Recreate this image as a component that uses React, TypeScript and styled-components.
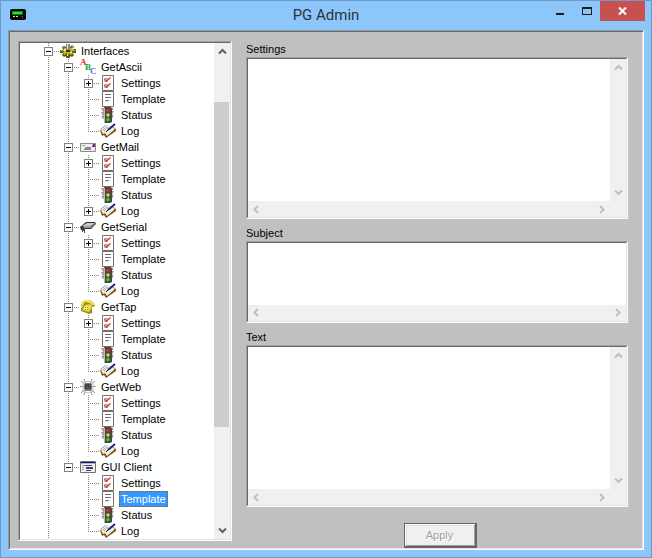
import React from "react";
import styled, { createGlobalStyle } from "styled-components";

const Global = createGlobalStyle`
  * { box-sizing: border-box; }
  html, body { margin: 0; }
  body { font-family: "Liberation Sans", Arial, sans-serif; font-size: 11px; line-height: 16px; color: #000; }
  button, textarea { font: inherit; color: inherit; margin: 0; padding: 0; border: 0; background: none; border-radius: 0; }
  ul { list-style: none; margin: 0; padding: 0; }
`;

const Window = styled.div`
  display: flex;
  flex-direction: column;
  height: 100vh;
  padding: 0 7px 7px;
  border: 1px solid #6a9bc9;
  background: #8cc6fb;
`;

const TitleBar = styled.header`
  display: grid;
  grid-template-columns: 1fr auto 1fr;
  height: 29px;
  flex: none;
`;

const AppIcon = styled.svg`
  width: 16px;
  height: 16px;
  margin: 5px 2px;
`;

const Title = styled.h1`
  margin: 0;
  font: 400 15px/29px Roboto, "Open Sans", sans-serif;
  color: #2c3338;
`;

const Controls = styled.div`
  display: flex;
  justify-content: flex-end;
  align-items: flex-start;
  margin-right: -1px;
`;

const Control = styled.button<{ $close?: boolean }>`
  display: grid;
  place-items: center;
  width: ${(p) => (p.$close ? 45 : 27)}px;
  height: 20px;
  background: ${(p) => (p.$close ? "#c75050" : "transparent")};
`;

const Client = styled.main`
  flex: 1;
  min-height: 0;
  display: grid;
  grid-template-columns: minmax(0, 214fr) minmax(0, 382fr);
  gap: 14px;
  padding: 10px 15px 1px 9px;
  background: #c0c0c0;
  border: 1px solid;
  border-color: #8a99a6 #fff #fff #8a99a6;
  box-shadow: inset 1px 1px #696969, inset -1px -1px #e3e3e3;
`;

const Sunken = styled.div`
  border: 1px solid;
  border-color: #a0a0a0 #fff #fff #a0a0a0;
  min-height: 0;
  display: flex;

  & > * {
    border: 1px solid;
    border-color: #696969 #e3e3e3 #e3e3e3 #696969;
  }
`;

const TreeFrame = styled(Sunken)`
  margin-bottom: 7px;
`;

const TreeView = styled.div`
  flex: 1;
  display: flex;
  min-width: 0;
  background: #fff;
`;

const TreeList = styled.ul`
  flex: 1;
  min-width: 0;
  padding-left: 20px;
  overflow: hidden;
`;

const Row = styled.div`
  display: flex;
  height: 16px;
`;

const dots = (dir: string) => `repeating-linear-gradient(${dir}, #808080 0 1px, transparent 1px 2px)`;

type Line = "none" | "full" | "half";

const Guide = styled.span<{ $line: Line; $branch?: boolean }>`
  flex: none;
  display: block;
  width: 20px;
  height: 16px;
  padding: 4px;
  background-image: ${dots("to bottom")}, ${dots("to right")};
  background-repeat: no-repeat;
  background-position: 8px 0, 8px 8px;
  background-size: ${(p) => (p.$line === "none" ? "0 0" : p.$line === "full" ? "1px 16px" : "1px 9px")},
    ${(p) => (p.$branch ? "11px 1px" : "0 0")};
`;

const Expander = styled.button`
  display: block;
  width: 9px;
  height: 9px;
  background: #fff;

  svg { display: block; }
`;

const ItemLabel = styled.button<{ $selected?: boolean }>`
  margin-left: 3px;
  padding: 0 2px;
  height: 16px;
  line-height: 16px;
  white-space: nowrap;
  color: ${(p) => (p.$selected ? "#fff" : "#000")};
  background: ${(p) => (p.$selected ? "#3399ff" : "transparent")};
  outline: ${(p) => (p.$selected ? "1px dotted #9a5a10" : "none")};
  outline-offset: -1px;
`;

const ItemIcon = styled.svg`
  flex: none;
  width: 16px;
  height: 16px;
  overflow: visible;
`;

const VBar = styled.div`
  flex: none;
  display: flex;
  flex-direction: column;
  width: 16px;
  background: #f0f0f0;
`;

const HBar = styled.div`
  display: flex;
  justify-content: space-between;
  height: 16px;
  background: #f0f0f0;
`;

const Space = styled.div<{ $grow: number }>`
  flex: ${(p) => p.$grow} 1 0;
`;

const Thumb = styled(Space)`
  background: #cdcdcd;
  margin-right: 1px;
`;

const Arrow = styled.button<{ $off?: boolean; $vertical: boolean }>`
  flex: none;
  display: grid;
  place-items: center;
  width: ${(p) => (p.$vertical ? 16 : 17)}px;
  height: ${(p) => (p.$vertical ? 17 : 16)}px;
  color: ${(p) => (p.$off ? "#bfbfbf" : "#606060")};
`;

const Form = styled.form`
  display: flex;
  flex-direction: column;
  gap: 6px;
  min-height: 0;
`;

const Field = styled.div<{ $grow: number }>`
  flex: ${(p) => p.$grow} 1 16px;
  min-height: 0;
  display: flex;
  flex-direction: column;
`;

const FieldLabel = styled.label`
  flex: none;
  height: 16px;
`;

const FieldFrame = styled(Sunken)`
  flex: 1;
`;

const Editor = styled.div<{ $vertical: boolean }>`
  flex: 1;
  min-width: 0;
  display: grid;
  grid-template-columns: minmax(0, 1fr) ${(p) => (p.$vertical ? "16px" : "")};
  grid-template-rows: minmax(0, 1fr) 16px;
  background: #f0f0f0;
`;

const TextArea = styled.textarea`
  display: block;
  width: 100%;
  height: 100%;
  padding: 1px 2px;
  resize: none;
  overflow: hidden;
  background: #fff;
  outline: none;
`;

const Apply = styled.button`
  flex: none;
  align-self: center;
  width: 73px;
  height: 25px;
  margin: 10px 0 0 6px;
  border: 1px solid #646464;
  border-right-width: 2px;
  border-bottom-width: 2px;
  background: #f0f0f0;
  box-shadow: inset 1px 1px #fff, inset -1px -1px #a0a0a0, inset 2px 2px #e3e3e3;
  color: #a0a0a0;
  text-shadow: 1px 1px #fff;
`;

type Dir = "up" | "down" | "left" | "right";
const chevrons: Record<Dir, string> = {
  up: "M1 6.500 L4.500 3 L8 6.500",
  down: "M1 2.500 L4.500 6 L8 2.500",
  left: "M6 1 L2.500 4.500 L6 8",
  right: "M3 1 L6.500 4.500 L3 8",
};

function ScrollArrow({ dir, off }: { dir: Dir; off?: boolean }) {
  return (
    <Arrow type="button" aria-label={`Scroll ${dir}`} disabled={off} $off={off} $vertical={dir === "up" || dir === "down"}>
      <svg width="9" height="9" viewBox="0 0 9 9" fill="none" stroke="currentColor" strokeWidth="2">
        <path d={chevrons[dir]} />
      </svg>
    </Arrow>
  );
}

type IconName = "gear" | "abc" | "settings" | "template" | "status" | "log" | "mail" | "serial" | "phone" | "spider" | "gui";

const page = <path d="M2.500 .5H13.500V15.500H2.500Z" fill="#fff" stroke="#707070" />;

const icons: Record<IconName, React.ReactNode> = {
  gear: (
    <>
      <path d="M6 2h4v2l2-2 2 2-1 2h3v4h-3l1 2-2 2-2-1v2H6v-2l-2 1-2-2 1-2H0V7h3L2 4l2-1 2 1Z" fill="#5e5912" />
      <path d="M6 2h3v3h2l2-2v3l2 1v1h-3l1 3-2 1-2-2-1 3H7v-3l-3 2-1-2 1-2H1V7h3L3 4l2 1h1Z" fill="#c0b42a" />
      <path d="M4 6h2v2H4zM10 9h2v1h-2zM7 11h1v2H7zM12 5h1v1h-1z" fill="#f4ee78" />
      <path d="M6 1h4v6H6z" fill="#858585" />
      <path d="M7 1h1v5H7z" fill="#e4e4e4" />
      <path d="M6 7h4v2H6z" fill="#393707" />
    </>
  ),
  abc: (
    <g fontFamily="Liberation Serif, serif" fontWeight="700" fontSize="9">
      <text x="0" y="6" fill="#ee1c24">A</text>
      <text x="5" y="11" fill="#12a53a">B</text>
      <text x="10" y="15" fill="#6b6bff">C</text>
    </g>
  ),
  settings: (
    <>
      {page}
      <path d="M4.500 3.500H7.500V6.500H4.500ZM4.500 9.500H7.500V12.500H4.500Z" fill="none" stroke="#b5a5a5" />
      <path d="M5 4L6.500 6L10.500 2.500M5 10L6.500 12L10.500 8.500" fill="none" stroke="#e8202c" strokeWidth="1.200" />
    </>
  ),
  template: (
    <>
      {page}
      <path d="M5 3.500H11M5 6.500H11M5 9.500H9" stroke="#707070" />
    </>
  ),
  status: (
    <>
      <path d="M1 1h13l-2 3h2l-2 4h2l-2 4H3L1 9h2L1 5h2Z" fill="#a2a2a2" />
      <path d="M4 0h7l1 2v13l-2 1H5l-1-1Z" fill="#484848" />
      <path d="M4 1h1v14H4z" fill="#c0c0c0" />
      <circle cx="8" cy="3.500" r="1.700" fill="#f02222" />
      <circle cx="8" cy="8" r="1.700" fill="#f0dc20" />
      <circle cx="8" cy="12.500" r="1.700" fill="#20dc35" />
    </>
  ),
  log: (
    <>
      <path d="M0 7L2 13L4 12L6 15L16 8V6L12 3Z" fill="#80502a" />
      <path d="M1 7L3 11L5 10L7 13L15 6L10 2Z" fill="#f8f2cc" />
      <path d="M1 5L6 1L10 4L5 9Z" fill="#ececec" />
      <path d="M1 6L6 2M3 7L8 3M4 8L9 4M3 4L7 8" stroke="#909090" strokeDasharray="1 1" />
      <path d="M8 7L15 1" stroke="#06209f" strokeWidth="1.800" />
      <path d="M6 9L8 7" stroke="#111" />
    </>
  ),
  mail: (
    <>
      <path d="M.5 4.500H15.500V12.500H.5Z" fill="#ededed" stroke="#8c8c8c" />
      <path d="M2 6h3v1H2z" fill="#a0a0a0" />
      <path d="M5 8h6v3H5zM4 10h1v1H4z" fill="#888" />
      <path d="M12 5h3v3h-3z" fill="#792889" />
      <path d="M12 5h1v2h-1z" fill="#c5a4d2" />
    </>
  ),
  serial: (
    <>
      <path d="M0 8L6 3H15L16 5L11 10H5L4 12L1 11Z" fill="#333" />
      <path d="M2 7L7 4H15L11 7Z" fill="#c8c8c8" />
      <path d="M3 7H11V9H4ZM12 7L15 5V6L11 9Z" fill="#999" />
      <path d="M2.500 9V13M4.500 9V14" stroke="#4e4e4e" />
    </>
  ),
  phone: (
    <>
      <path d="M1 4L5 1H10L14 4L15 7L12 8V14L9 15L1 12V9L4 6L1 7Z" fill="#9c8d1a" />
      <path d="M1 4L5 1H10L14 4V6H12L10 4L5 3L3 6H1Z" fill="#f1e651" />
      <path d="M5 6L11 5L12 8L9 13L2 11Z" fill="#e5d83d" />
      <path d="M5 7L9 8L7 11L4 10Z" fill="#fff6a6" />
      <path d="M5 8h1v1H5zM7 8h1v1H7zM5 10h1v1H5zM7 10h1v1H7z" fill="#a18e19" />
    </>
  ),
  spider: (
    <>
      <path d="M1 2L5 5H11L15 2M4 0L6 5M12 0L10 5M0 7.500H16M1 14L5 10H11L15 14M4 16L6 10M12 16L10 10" fill="none" stroke="#999" />
      <path d="M3 3L13 13M13 3L3 13M3 4V12M13 4V12M5 2.500H11M5 13.500H11" fill="none" stroke="#c4c4c4" />
      <path d="M5 4h6l1 2v4l-2 2H6l-2-2V6Z" fill="#7c7c7c" />
      <path d="M5 5h6v5H5z" fill="#444" />
      <path d="M6 6h1v1H6zM9 8h1v1H9z" fill="#bc3333" />
      <path d="M9 6h1v1H9zM7 8h1v1H7z" fill="#339c45" />
    </>
  ),
  gui: (
    <>
      <path d="M.5 2.500H15.500V13.500H.5Z" fill="#f2f2f2" stroke="#707070" />
      <path d="M1 3h14v1H1z" fill="#0a187c" />
      <path d="M1 4h14v1H1z" fill="#b8b8c8" />
      <path d="M2 6h3v1H2zM2 8h2v1H2zM2 10h2v1H2z" fill="#999" />
      <path d="M5 6h7v1H5zM6 8h7v2H6zM6 11h5v1H6z" fill="#3a4274" />
    </>
  ),
};

interface TreeNode {
  label: string;
  icon: IconName;
  state?: "open" | "closed";
  selected?: boolean;
  children?: TreeNode[];
}

const leaves = (closed: string[] = [], selected?: string): TreeNode[] =>
  (["Settings", "Template", "Status", "Log"] as const).map((label) => ({
    label,
    icon: label.toLowerCase() as IconName,
    state: closed.includes(label) ? "closed" : undefined,
    selected: label === selected,
  }));

const root: TreeNode = {
  label: "Interfaces",
  icon: "gear",
  state: "open",
  children: [
    { label: "GetAscii", icon: "abc", state: "open", children: leaves(["Settings"]) },
    { label: "GetMail", icon: "mail", state: "open", children: leaves(["Settings", "Log"]) },
    { label: "GetSerial", icon: "serial", state: "open", children: leaves(["Settings"]) },
    { label: "GetTap", icon: "phone", state: "open", children: leaves(["Settings"]) },
    { label: "GetWeb", icon: "spider", state: "open", children: leaves() },
    { label: "GUI Client", icon: "gui", state: "open", children: leaves([], "Template") },
  ],
};

function TreeItem({ node, ancestors, last }: { node: TreeNode; ancestors: Line[]; last: boolean }) {
  const next: Line[] = [...ancestors, last ? "none" : "full"];
  return (
    <li role="treeitem" aria-expanded={node.state ? node.state === "open" : undefined} aria-selected={!!node.selected}>
      <Row>
        {ancestors.map((line, i) => (
          <Guide key={i} $line={line} />
        ))}
        <Guide $line={last ? "half" : "full"} $branch>
          {node.state && (
            <Expander type="button" aria-label={`${node.state === "open" ? "Collapse" : "Expand"} ${node.label}`}>
              <svg width="9" height="9" viewBox="0 0 9 9" fill="none" shapeRendering="crispEdges">
                <path d="M.5 .5H8.500V8.500H.5Z" stroke="#808080" />
                <path d={node.state === "open" ? "M2 4.500H7" : "M2 4.500H7M4.500 2V7"} stroke="#000" />
              </svg>
            </Expander>
          )}
        </Guide>
        <ItemIcon viewBox="0 0 16 16" aria-hidden="true">{icons[node.icon]}</ItemIcon>
        <ItemLabel type="button" $selected={node.selected}>{node.label}</ItemLabel>
      </Row>
      {node.children && (
        <ul role="group">
          {node.children.map((child, i) => (
            <TreeItem key={child.label} node={child} ancestors={next} last={i === node.children!.length - 1} />
          ))}
        </ul>
      )}
    </li>
  );
}

function TextField({ id, label, grow, vertical = true }: { id: string; label: string; grow: number; vertical?: boolean }) {
  return (
    <Field $grow={grow}>
      <FieldLabel htmlFor={id}>{label}</FieldLabel>
      <FieldFrame>
        <Editor $vertical={vertical}>
          <TextArea id={id} wrap="off" />
          {vertical && (
            <VBar>
              <ScrollArrow dir="up" off />
              <Space $grow={1} />
              <ScrollArrow dir="down" off />
            </VBar>
          )}
          <HBar>
            <ScrollArrow dir="left" off />
            <ScrollArrow dir="right" off />
          </HBar>
        </Editor>
      </FieldFrame>
    </Field>
  );
}

export default function App() {
  return (
    <>
      <Global />
      <Window>
        <TitleBar>
          <AppIcon viewBox="0 0 16 16" aria-hidden="true">
            <rect x="0" y="3" width="16" height="11" rx="2" fill="#050505" />
            <path d="M2 5h11v4H2z" fill="#0a7d0a" />
            <path d="M3 6h9v2H3z" fill="#18ee28" />
            <path d="M3 10h2v1H3zM6 10h2v1H6z" fill="#ddd" />
            <path d="M11 10h2v1h-2zM12 12h1v1h-1z" fill="#b02020" />
          </AppIcon>
          <Title>PG Admin</Title>
          <Controls>
            <Control type="button" aria-label="Minimize">
              <svg width="10" height="10" viewBox="0 0 10 10"><path d="M1 7h8v2H1z" fill="#1c1c1c" /></svg>
            </Control>
            <Control type="button" aria-label="Maximize">
              <svg width="10" height="8" viewBox="0 0 10 8"><path d="M0 0h10v8H0zM1 2v5h8V2z" fill="#1c1c1c" fillRule="evenodd" /></svg>
            </Control>
            <Control type="button" aria-label="Close" $close>
              <svg width="9" height="8" viewBox="0 0 9 8"><path d="M1 .5L8 7.500M8 .5L1 7.500" stroke="#fff" strokeWidth="2" /></svg>
            </Control>
          </Controls>
        </TitleBar>
        <Client>
          <TreeFrame>
            <TreeView>
              <TreeList role="tree" aria-label="Interfaces">
                <TreeItem node={root} ancestors={[]} last={false} />
              </TreeList>
              <VBar>
                <ScrollArrow dir="up" />
                <Space $grow={42} />
                <Thumb $grow={325} />
                <Space $grow={95} />
                <ScrollArrow dir="down" />
              </VBar>
            </TreeView>
          </TreeFrame>
          <Form onSubmit={(e) => e.preventDefault()}>
            <TextField id="settings" label="Settings" grow={2} />
            <TextField id="subject" label="Subject" grow={1} vertical={false} />
            <TextField id="text" label="Text" grow={2} />
            <Apply type="submit" disabled>Apply</Apply>
          </Form>
        </Client>
      </Window>
    </>
  );
}
